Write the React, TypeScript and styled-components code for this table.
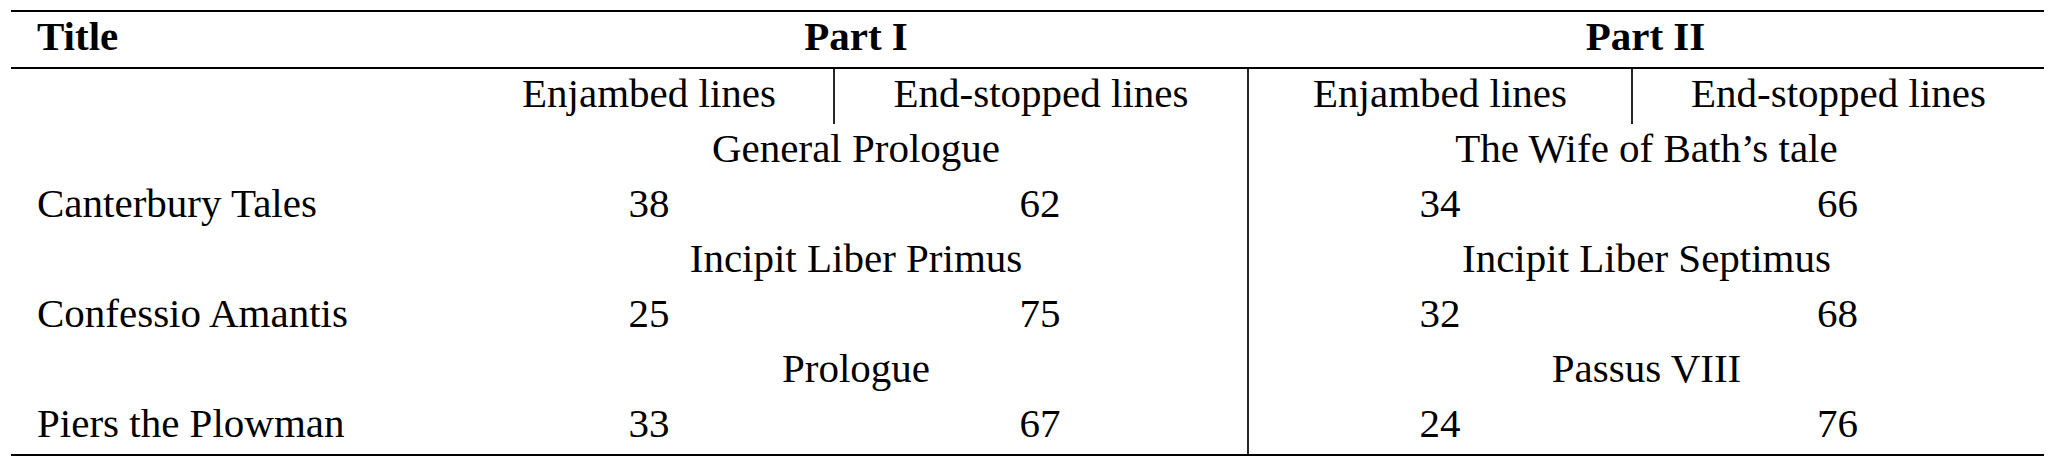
import { Fragment } from "react";
import styled, { createGlobalStyle } from "styled-components";

const GlobalStyle = createGlobalStyle`
    body {
        margin: 0;
        background: #ffffff;
        color: #000000;
        font-family: "Liberation Serif", "Times New Roman", serif;
    }
`;

const Page = styled.div`
    padding: 10px 0 0 11px;
`;

const Table = styled.div`
    display: grid;
    grid-template-columns: 454px 368px 414px 384px 413px;
    grid-template-rows: 55px 2px;
    grid-auto-rows: 55px;
    width: 2033px;
    border-top: 2px solid #000;
    border-bottom: 2px solid #000;
`;

const Rule = styled.div`
    grid-column: 1 / -1;
    height: 2px;
    background: #000;
`;

const Cell = styled.div<{
    $span?: number;
    $left?: boolean;
    $bold?: boolean;
    $divider?: boolean;
}>`
    grid-column: span ${(p) => p.$span ?? 1};
    box-sizing: border-box;
    height: 55px;
    padding: 0 0 6px ${(p) => (p.$left ? "26px" : "0")};
    line-height: 49px;
    font-size: 41px;
    font-weight: ${(p) => (p.$bold ? 700 : 400)};
    text-align: ${(p) => (p.$left ? "left" : "center")};
    white-space: nowrap;
    border-left: ${(p) => (p.$divider ? "2px solid #262626" : "0")};
`;

interface Work {
    title: string;
    partOne: { section: string; enjambed: number; endStopped: number };
    partTwo: { section: string; enjambed: number; endStopped: number };
}

const works: Work[] = [
    {
        title: "Canterbury Tales",
        partOne: { section: "General Prologue", enjambed: 38, endStopped: 62 },
        partTwo: { section: "The Wife of Bath’s tale", enjambed: 34, endStopped: 66 },
    },
    {
        title: "Confessio Amantis",
        partOne: { section: "Incipit Liber Primus", enjambed: 25, endStopped: 75 },
        partTwo: { section: "Incipit Liber Septimus", enjambed: 32, endStopped: 68 },
    },
    {
        title: "Piers the Plowman",
        partOne: { section: "Prologue", enjambed: 33, endStopped: 67 },
        partTwo: { section: "Passus VIII", enjambed: 24, endStopped: 76 },
    },
];

const App = () => {
    return (
        <Page>
            <GlobalStyle />
            <Table>
                <Cell $left $bold>
                    Title
                </Cell>
                <Cell $span={2} $bold>
                    Part I
                </Cell>
                <Cell $span={2} $bold>
                    Part II
                </Cell>
                <Rule />

                <Cell />
                <Cell>Enjambed lines</Cell>
                <Cell $divider>End-stopped lines</Cell>
                <Cell $divider>Enjambed lines</Cell>
                <Cell $divider>End-stopped lines</Cell>

                {works.map((work) => (
                    <Fragment key={work.title}>
                        <Cell />
                        <Cell $span={2}>{work.partOne.section}</Cell>
                        <Cell $span={2} $divider>
                            {work.partTwo.section}
                        </Cell>
                        <Cell $left>{work.title}</Cell>
                        <Cell>{work.partOne.enjambed}</Cell>
                        <Cell>{work.partOne.endStopped}</Cell>
                        <Cell $divider>{work.partTwo.enjambed}</Cell>
                        <Cell>{work.partTwo.endStopped}</Cell>
                    </Fragment>
                ))}
            </Table>
        </Page>
    );
};

export default App;
